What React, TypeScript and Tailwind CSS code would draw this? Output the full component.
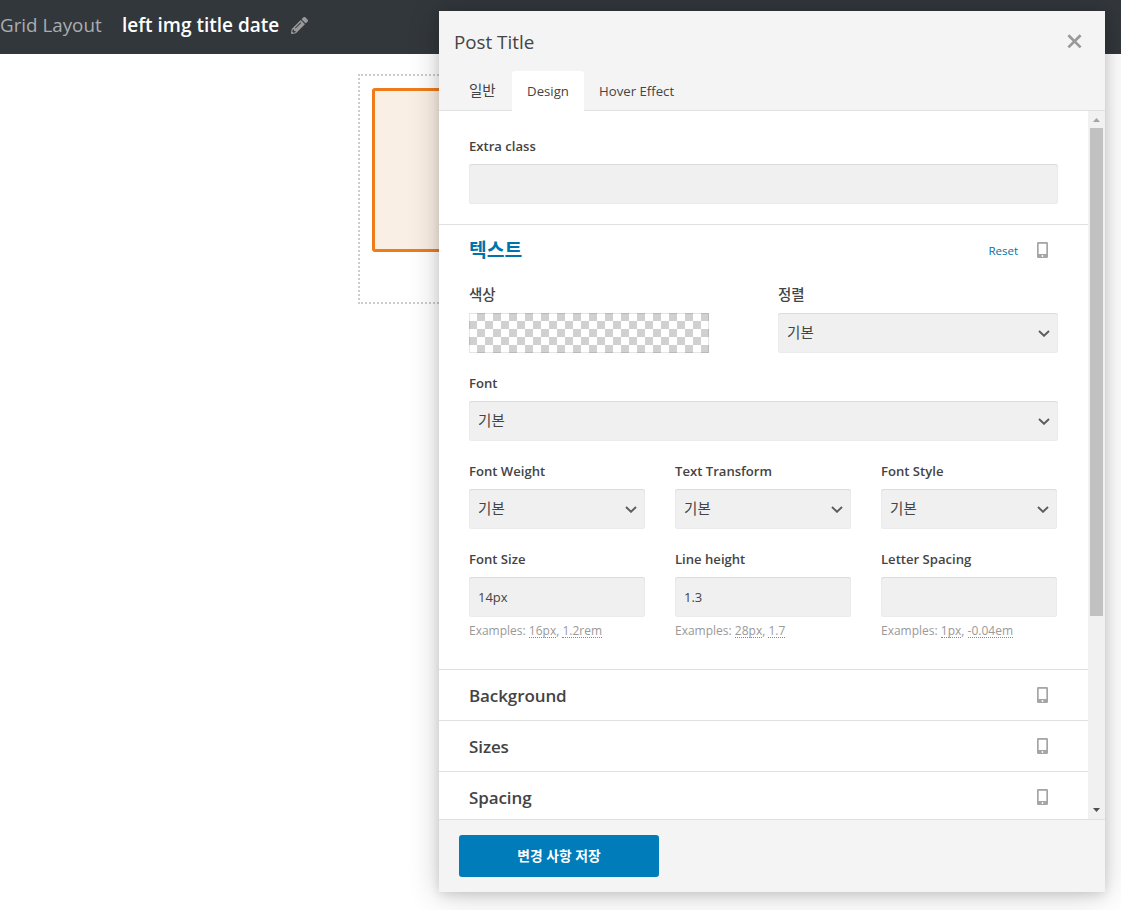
import React from 'react';
import { FaPencilAlt } from 'react-icons/fa';

const PhoneIcon = () => (
    <svg className="block h-4 w-[11px]" viewBox="0 0 11 16" fill="none">
        <rect width="11" height="16" rx="1.3" fill="#a5a5a5" />
        <rect x="1.7" y="1.8" width="7.6" height="10.2" fill="#fff" />
        <circle cx="5.5" cy="14" r="0.9" fill="#fff" />
    </svg>
);

const Chevron = () => (
    <svg className="block h-[7px] w-3" viewBox="0 0 12 7" fill="none">
        <path d="M1 1l5 4.8L11 1" stroke="#5a5c5e" strokeWidth="1.9" />
    </svg>
);

type FieldProps = {
    label: string;
    className?: string;
    labelClass?: string;
    children: React.ReactNode;
};

const Field = ({ label, className = '', labelClass = 'text-[13.1px] font-semibold', children }: FieldProps) => (
    <div className={className}>
        <div className={`mb-2 h-5 leading-5 whitespace-nowrap ${labelClass}`}>{label}</div>
        {children}
    </div>
);

const boxClass = 'h-10 rounded-[3px] bg-[#f0f0f0] shadow-[inset_0_1px_0_#dcdcdc,inset_0_0_0_1px_#ebebeb]';

const Select = () => (
    <div className={`${boxClass} flex items-center justify-between pr-2 pl-[9px]`}>
        <span className="pb-px text-[14.5px] leading-5 tracking-[0.1px]">기본</span>
        <Chevron />
    </div>
);

const Input = ({ value = '' }: { value?: string }) => (
    <input
        type="text"
        defaultValue={value}
        className={`${boxClass} block w-full px-[9px] text-[13px] outline-none`}
    />
);

const Examples = ({ items }: { items: string[] }) => (
    <div className="mt-1 h-5 text-[12px] leading-5 whitespace-nowrap text-[#999]">
        Examples:{' '}
        {items.map((item, i) => (
            <React.Fragment key={item}>
                {i > 0 && ', '}
                <span className="inline-block h-[15px] border-b border-dotted border-[#888] leading-[15px]">{item}</span>
            </React.Fragment>
        ))}
    </div>
);

const koreanLabel = 'text-[14.5px] font-medium';
const closedSections = ['Background', 'Sizes', 'Spacing'];

export default function App() {
    return (
        <div className="relative h-[910px] w-[1121px] overflow-hidden bg-white font-['Open_Sans','Noto_Sans_CJK_KR',sans-serif] text-[#444]">
            <header className="flex h-[54px] items-center bg-[#32373c] pb-1 whitespace-nowrap">
                <span className="w-[122px] text-[18.8px] text-[#aaadb0]">Grid Layout</span>
                <span className="w-[169px] pt-px text-[19px] font-semibold text-white">left img title date</span>
                <FaPencilAlt className="h-[17px] w-[17px] text-[#999]" />
            </header>

            <main className="pt-5 pl-[358px]">
                <div className="h-[230px] w-[405px] border-2 border-dotted border-[#ccc] p-3">
                    <div className="h-[164px] rounded-[3px] border-3 border-[#ee7c1b] bg-[#faefe4]" />
                </div>
            </main>

            <div className="absolute top-[11px] left-[439px] flex h-[881px] w-[666px] flex-col bg-white shadow-[0_2px_10px_rgba(0,0,0,0.12),0_3px_30px_rgba(0,0,0,0.2)]">
                <div className="flex h-[100px] shrink-0 flex-col justify-between border-b border-[#e0e0e0] bg-[#f4f4f4]">
                    <div className="flex h-[60px] items-center justify-between pr-[23px] pl-[15px]">
                        <h1 className="pt-0.5 text-[18.8px]">Post Title</h1>
                        <svg className="h-[15px] w-[15px]" viewBox="0 0 15 15" fill="none">
                            <path d="M1.4 1.2l12.2 12.2M13.6 1.2L1.4 13.4" stroke="#999" strokeWidth="2.7" />
                        </svg>
                    </div>
                    <div className="-mb-px flex h-10 pl-[15px] text-[13.2px] leading-10 whitespace-nowrap">
                        <div className="w-[58px] pl-[15px] text-[14.5px]">일반</div>
                        <div className="w-[72px] rounded-t-[3px] bg-white text-center">Design</div>
                        <div className="pl-[15px]">Hover Effect</div>
                    </div>
                </div>

                <div className="flex min-h-0 flex-1">
                    <div className="min-w-0 flex-1 overflow-hidden">
                        <div className="border-b border-[#e0e0e0] px-[30px] pt-[25px] pb-5">
                            <Field label="Extra class">
                                <Input />
                            </Field>
                        </div>

                        <section className="border-b border-[#e0e0e0] px-[30px] pb-7">
                            <div className="flex h-[50px] items-center pr-[10px]">
                                <h2 className="flex-1 text-[19.3px] font-bold text-[#0073aa]">텍스트</h2>
                                <span className="mr-[19px] pt-0.5 text-[11.5px] text-[#0073aa]">Reset</span>
                                <PhoneIcon />
                            </div>
                            <div className="flex flex-col gap-5 pt-[10px]">
                                <div className="flex justify-between">
                                    <Field label="색상" className="w-60" labelClass={koreanLabel}>
                                        <div className="h-10 bg-[conic-gradient(#d0d0d0_25%,#fff_0_50%,#d0d0d0_0_75%,#fff_0)] bg-[length:16px_16px] shadow-[inset_0_0_0_1px_rgba(0,0,0,0.1)]" />
                                    </Field>
                                    <Field label="정렬" className="w-[280px]" labelClass={koreanLabel}>
                                        <Select />
                                    </Field>
                                </div>
                                <Field label="Font">
                                    <Select />
                                </Field>
                                <div className="grid grid-cols-[176px_176px_176px] gap-[30px] gap-y-5">
                                    <Field label="Font Weight">
                                        <Select />
                                    </Field>
                                    <Field label="Text Transform">
                                        <Select />
                                    </Field>
                                    <Field label="Font Style">
                                        <Select />
                                    </Field>
                                    <Field label="Font Size">
                                        <Input value="14px" />
                                        <Examples items={['16px', '1.2rem']} />
                                    </Field>
                                    <Field label="Line height">
                                        <Input value="1.3" />
                                        <Examples items={['28px', '1.7']} />
                                    </Field>
                                    <Field label="Letter Spacing">
                                        <Input />
                                        <Examples items={['1px', '-0.04em']} />
                                    </Field>
                                </div>
                            </div>
                        </section>

                        {closedSections.map((title) => (
                            <div key={title} className="flex h-[51px] items-center justify-between border-b border-[#e0e0e0] pr-10 pl-[30px]">
                                <h2 className="pt-0.5 text-[17px] font-semibold tracking-[-0.1px]">{title}</h2>
                                <PhoneIcon />
                            </div>
                        ))}
                    </div>

                    <div className="flex w-[17px] flex-col items-center justify-between bg-[#f1f1f1]">
                        <div className="flex flex-col items-center">
                            <svg className="h-[17px] w-[17px]" viewBox="0 0 17 17">
                                <path d="M5 11l3.5-4 3.5 4z" fill="#a3a3a3" />
                            </svg>
                            <div className="h-[488px] w-[13px] bg-[#c1c1c1]" />
                        </div>
                        <svg className="h-[17px] w-[17px]" viewBox="0 0 17 17">
                            <path d="M5 6l3.5 4L12 6z" fill="#505050" />
                        </svg>
                    </div>
                </div>

                <div className="h-[73px] shrink-0 border-t border-[#e0e0e0] bg-[#f4f4f4] px-5 pt-[15px]">
                    <button className="block h-[42px] w-[200px] rounded-[3px] bg-[#007cba] text-[13.8px] font-bold text-white">변경 사항 저장</button>
                </div>
            </div>
        </div>
    );
}
